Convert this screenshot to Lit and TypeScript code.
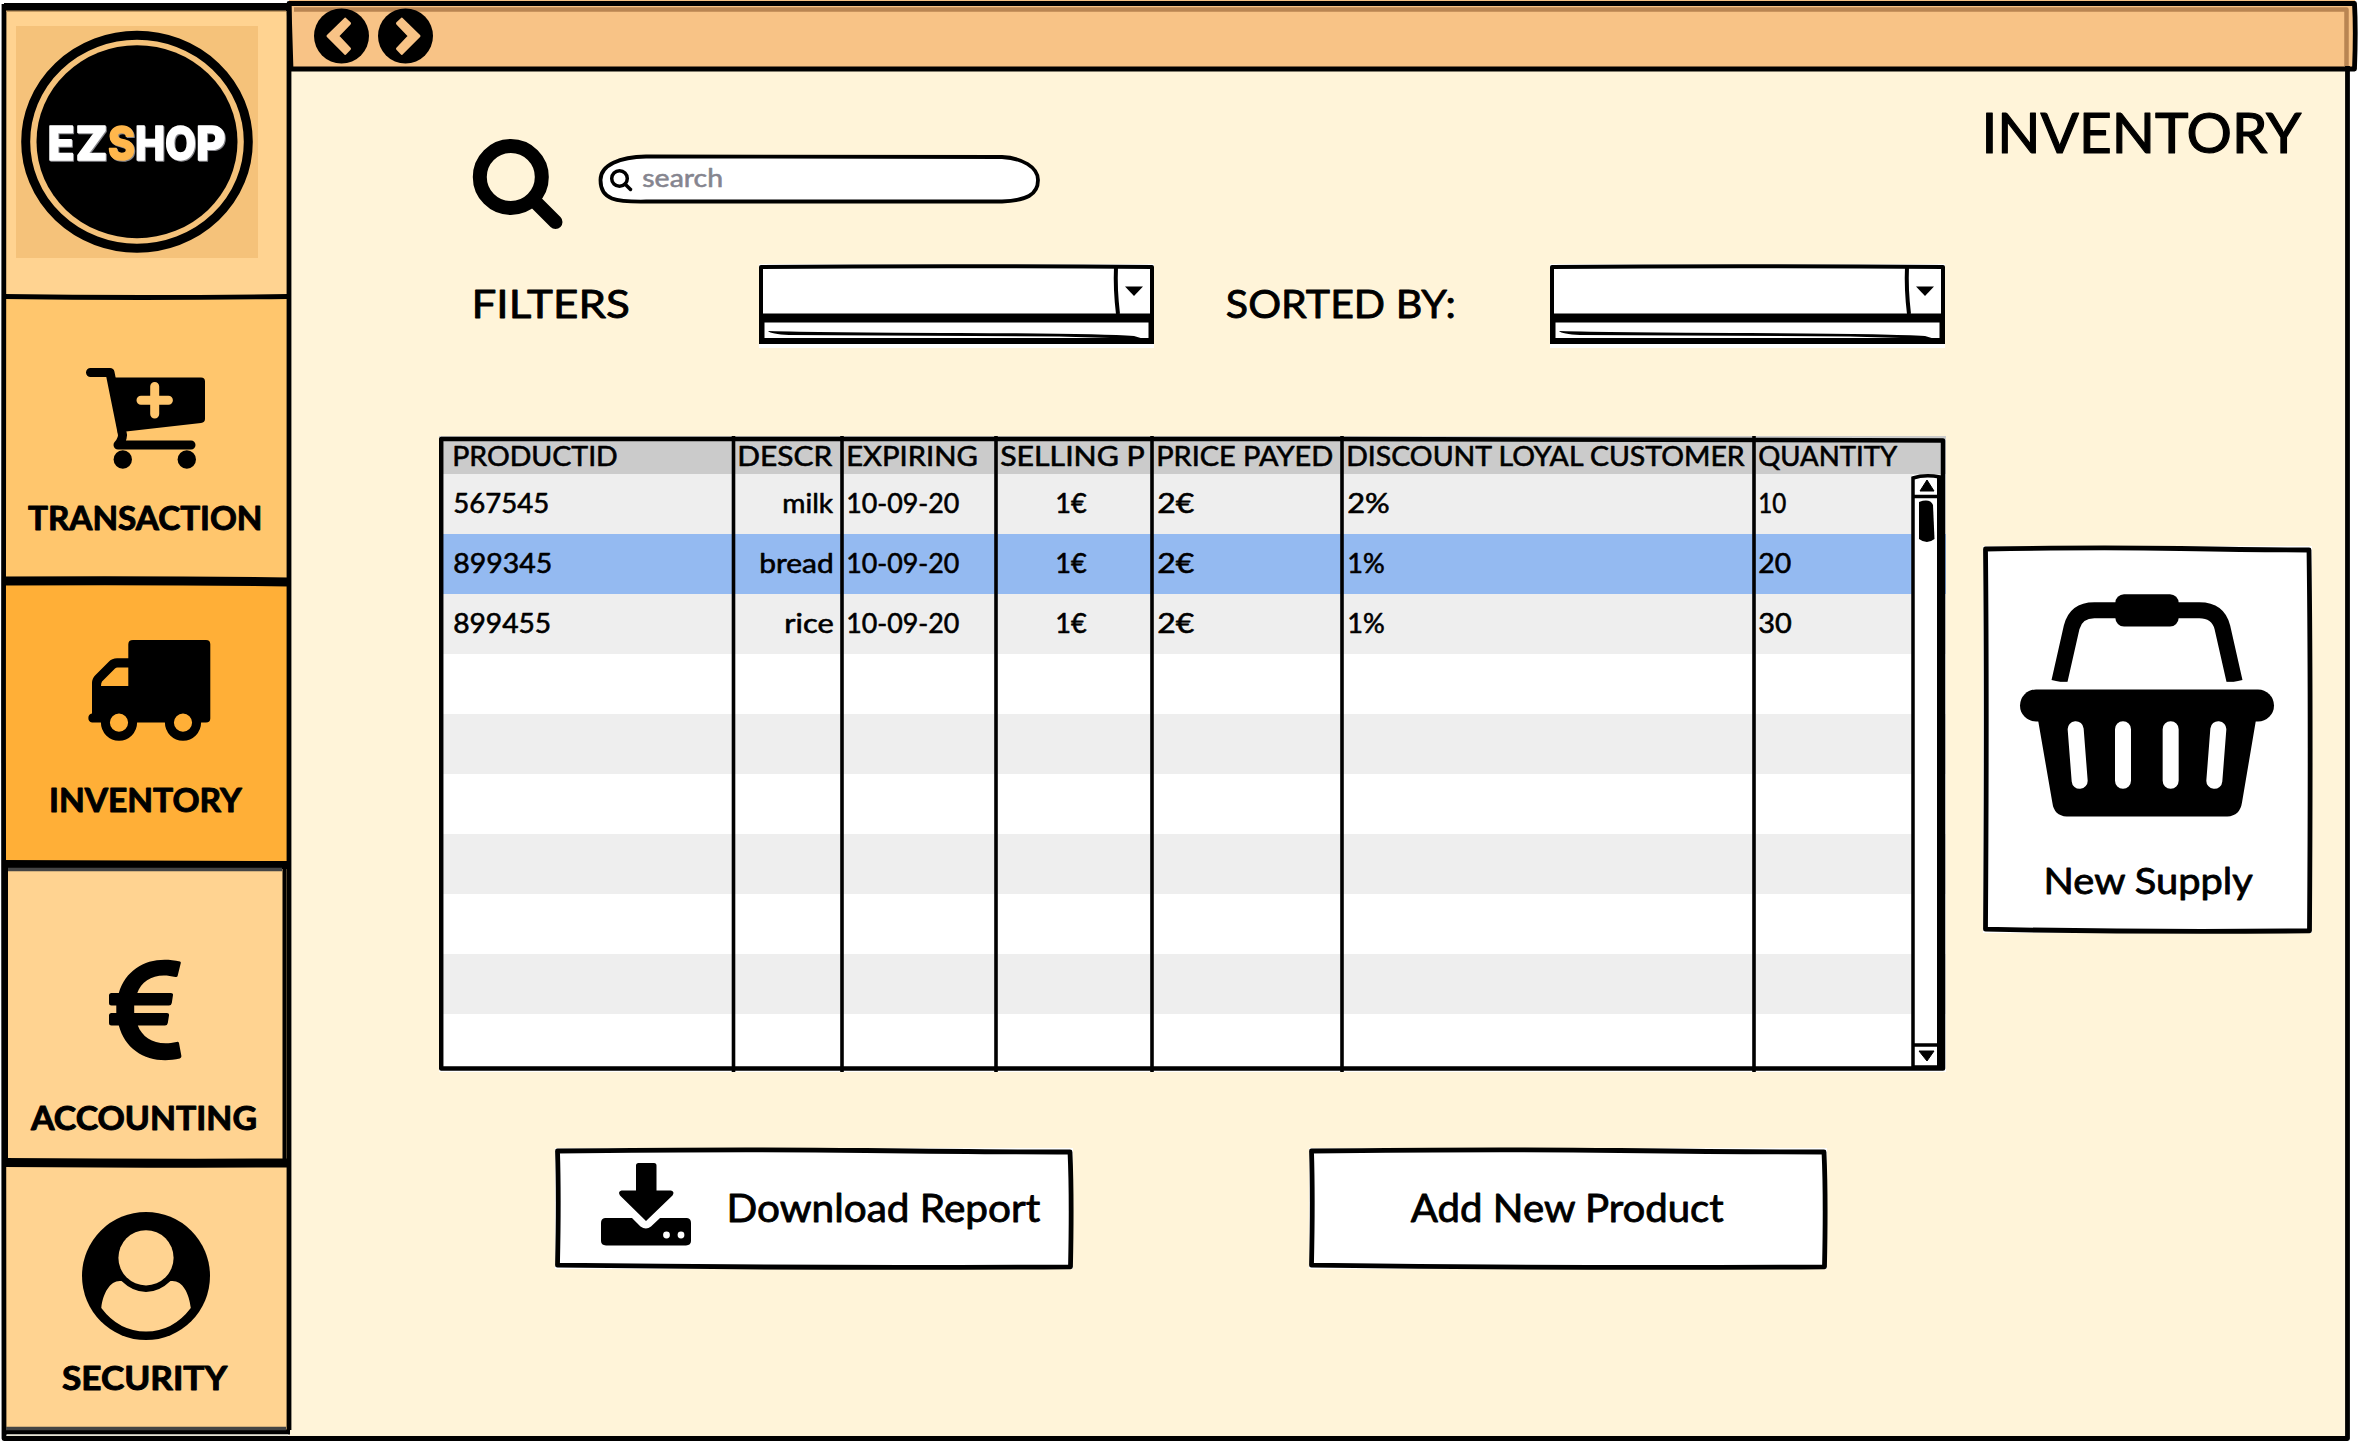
import { LitElement, html, css, svg } from "lit";
import { customElement, property } from "lit/decorators.js";

/* One line of lettering; the host box spans the ink: width x cap height. */
@customElement("pen-text")
class PenText extends LitElement {
  @property() text = "";
  @property({ type: Number }) w = 100;
  @property({ type: Number }) cap = 20;
  @property({ type: Number }) bold = 0;
  static styles = css`
    :host { display: block; flex: none; }
    svg { display: block; overflow: visible; }
    text {
      font-family: Lato, "Liberation Sans", sans-serif;
      fill: currentColor;
      stroke: currentColor;
      stroke-linejoin: round;
      white-space: pre;
    }
  `;
  render() {
    const size = this.cap / 0.72;
    const first = this.text[0];
    const bearing = "1AVTYswQOSC2358".includes(first) ? 0.03 : 0.065;
    const last = this.text[this.text.length - 1];
    const end = "YRrtwykVT:".includes(last) ? 0.005 : 0.045;
    return html`<svg width=${this.w} height=${this.cap}>
      <text x=${-bearing * size} y=${this.cap + 0.5} font-size=${size}
        font-weight=${this.bold ? 700 : 400}
        stroke-width=${this.bold ? size * 0.03 : size * 0.022}
        textLength=${this.w + (bearing + end) * size}
        lengthAdjust="spacingAndGlyphs">${this.text}</text>
    </svg>`;
  }
}

const t = (text: string, w: number, cap: number, bold = 0) =>
  html`<pen-text .text=${text} .w=${w} .cap=${cap} .bold=${bold}></pen-text>`;

/* Slightly uneven rectangle outline filling its positioned parent. */
const frame = (w: number, h: number) => html`<svg class="frame" width=${w} height=${h}>
  <path d="M2.5 3 Q${w * 0.35} 1 ${w * 0.6} 2.5 T${w - 3} 4 Q${w - 1} ${h * 0.4} ${w - 2.5} ${h - 2.2} Q${w * 0.5} ${h - 0.6} 2.5 ${h - 3.8} Q4 ${h * 0.4} 2.5 3Z"
    fill="none" stroke="#000" stroke-width="4.8" stroke-linejoin="round"/></svg>`;

const cart = svg`<path d="M4.5 4.5 H24 L36 64 Q38 70 32 77 H105" fill="none" stroke="#000" stroke-width="9" stroke-linecap="round" stroke-linejoin="round"/>
  <path d="M24 9.5 H115 Q119 9.5 119 13.5 V51 Q119 54.5 115 55 L40 63.5 L32 66Z"/>
  <circle cx="36.8" cy="91.5" r="9.2"/><circle cx="100.8" cy="91.5" r="9.2"/>
  <path d="M68.7 18.5 V46 M55 32.2 H82.4" stroke="#ffc66d" stroke-width="9" stroke-linecap="round"/>`;

const truck = svg`<path fill-rule="evenodd" d="M46 0 H119 Q123.300 0 123.300 4.300 V78.500 Q123.300 82.500 119 82.500 H5 A4.600 4.600 0 0 1 5 73.500 V43 Q5 38.500 8.500 35 L21.500 22 Q25 18.300 30 18.300 H41.300 V4.300 Q41.300 0 46 0Z M41.300 27.500 H30.500 Q29 27.500 28 28.500 L15 41.500 Q14 43 14 46 H41.300Z"/>
  <circle cx="32" cy="82.600" r="13.600" fill="#ffaf37" stroke="#000" stroke-width="9"/>
  <circle cx="96" cy="82.600" r="13.600" fill="#ffaf37" stroke="#000" stroke-width="9"/>`;

const euro = svg`<path d="M71 2.500 Q72 2.800 71.800 4 L68.600 17 Q68.200 18.300 66.500 18 C48 13 33 20 28.300 34 H62 Q64.300 34 64 36 L62.800 44 Q62.300 46.500 60 46.500 H25.200 V54 H58 Q60.500 54 60 56.500 L58.800 64 Q58.300 66.500 56 66.500 H28.800 C34 80 48 87.500 67.500 83 Q69.500 82.300 70 84 L72.400 97 Q72.600 98.800 70.800 99.500 C43 106 17 94 9.800 66.500 H2.500 Q0 66.500 0 64 V56.500 Q0 54 2.500 54 H7.300 V46.500 H2.500 Q0 46.500 0 44 V36.500 Q0 34 2.500 34 H9.800 C18 7 43 -4 71 2.500Z"/>`;

const person = svg`<circle cx="64" cy="64" r="64"/>
  <circle cx="64" cy="45.800" r="27.600" fill="#ffd391"/>
  <path d="M39.500 69 Q51 80 64 80 T88.500 69 C100 67.500 107 80 108.800 96 Q91 119.500 64 119.500 T19.300 96 C21 80 29 67.500 39.500 69Z" fill="#ffd391"/>`;

const logoLetters: [string, number, number][] = [
  ["E", 31.5, 27], ["Z", 59.5, 32], ["S", 92, 27], ["H", 119, 30], ["O", 149, 31], ["P", 180, 29.5],
];

const headers: [string, number][] = [
  ["PRODUCTID", 162.5], ["DESCR", 93], ["EXPIRING", 128.5], ["SELLING P", 142.5],
  ["PRICE PAYED", 174], ["DISCOUNT LOYAL CUSTOMER", 396.5], ["QUANTITY", 138],
];
const rows: [string, number][][] = [
  [["567545", 94], ["milk", 49], ["10-09-20", 111], ["1€", 29.5], ["2€", 35], ["2%", 40.5], ["10", 26]],
  [["899345", 97], ["bread", 71.5], ["10-09-20", 111], ["1€", 29.5], ["2€", 35], ["1%", 35.5], ["20", 31]],
  [["899455", 96], ["rice", 46.5], ["10-09-20", 111], ["1€", 29.5], ["2€", 35], ["1%", 35.5], ["30", 31.5]],
  [], [], [], [], [], [], [],
];

const chevron = "345.2,19.2 349.5,23.4 337.5,36 349.5,48.700 345.2,53.300 328,36";

@customElement("app-root")
class AppRoot extends LitElement {
  static styles = css`
    :host { display: block; width: 2358px; height: 1442px; background: #fff; overflow: hidden; }
    * { box-sizing: border-box; }
    svg { display: block; flex: none; overflow: visible; }
    .window { position: relative; display: grid; grid-template-columns: 289px 1fr; height: 1442px; }
    .lines { position: absolute; left: 0; top: 0; pointer-events: none; }
    .frame { position: absolute; left: 0; top: 0; }
    .side { display: flex; flex-direction: column; padding: 4px 0 0 3px; height: 1438px; }
    .cell { display: flex; flex-direction: column; flex: none; }
    .logo { height: 293px; background: #ffd391; padding: 22px 0 0 13px; }
    .wordmark { font-family: Inter, sans-serif; font-weight: 800; font-size: 46px; fill: #fff; stroke: #fff; stroke-width: 1.5px; stroke-linejoin: round; filter: drop-shadow(1.5px 1.5px 0 #85858a); }
    .wordmark .accent { fill: #ffb74c; stroke: #ffb74c; }
    .transaction { height: 284px; background: #ffc66d; padding: 71px 0 0 83px; }
    .transaction pen-text { margin: 36.5px 0 0 -57.500px; }
    .inventory { height: 284px; background: #ffaf37; padding: 59px 0 0 84px; }
    .inventory pen-text { margin: 46.500px 0 0 -36px; }
    .accounting { height: 298px; background: #ffd391; padding: 94px 0 0 106px; }
    .accounting pen-text { margin: 45.500px 0 0 -77px; }
    .security { height: 270px; background: #ffd391; padding: 49px 0 0 79px; }
    .security pen-text { margin: 25.500px 0 0 -19px; }
    .main { display: flex; flex-direction: column; }
    .bar { height: 68px; background: #f8c386; margin-right: 3px; }
    .body { display: flex; height: 1371px; width: 2059px; background: #fff4d9; padding-left: 150px; }
    .work { width: 1506px; display: flex; flex-direction: column; }
    .search { display: flex; align-items: flex-start; gap: 35px; padding: 71px 0 0 34px; height: 161px; }
    .field { width: 442px; height: 50px; margin-top: 15px; position: relative; display: flex; align-items: flex-start; }
    .field svg.pill { position: absolute; left: 0; top: 0; }
    .field .glass { margin: 15px 0 0 12px; position: relative; }
    .field pen-text { color: #85858f; position: relative; margin: 14px 0 0 10.500px; }
    .filters { display: flex; align-items: flex-start; margin-top: 35px; padding-left: 34.500px; height: 84px; }
    .filters pen-text { margin-top: 25px; }
    .filters .combo1 { margin-left: 131.500px; }
    .filters .sorted { margin-left: 73px; }
    .filters .combo2 { margin-left: 94.500px; }
    .table { margin-top: 88px; width: 1507px; height: 636px; position: relative; background: #fff; display: flex; flex-direction: column; padding: 0; overflow: hidden; }
    .row { display: grid; grid-template-columns: 295px 108px 154px 156px 190px 412px 192px; height: 60px; flex: none; padding-top: 18.500px; }
    .row.head { height: 38px; background: #cbcbcb; padding-top: 9px; }
    .row.odd { background: #eee; }
    .row.picked { background: #94baf1; }
    .c { display: flex; padding-left: 5px; }
    .c0 { padding-left: 14.500px; }
    .c2, .c4, .c5 { padding-left: 6px; }
    .row:not(.head) .c1 { justify-content: flex-end; padding-right: 9.500px; }
    .row:not(.head) .c3 { padding-left: 60px; }
    .row:not(.head) .c2 { padding-left: 5px; }
    .buttons { display: flex; gap: 236px; margin-top: 76px; padding-left: 116px; }
    .button { position: relative; width: 518px; height: 121px; background: #fff; display: flex; align-items: flex-start; }
    .dl { padding: 14.500px 0 0 46px; }
    .dl pen-text { margin: 31px 0 0 38px; }
    .add { padding: 45.500px 0 0 103px; }
    .extra { width: 329px; margin-left: 37.500px; display: flex; flex-direction: column; padding-top: 44px; }
    .extra > pen-text { margin-left: 2px; }
    .supply { position: relative; margin-top: 394px; width: 329px; height: 387px; background: #fff; padding: 48px 0 0 37.500px; }
    .supply pen-text { margin: 49px 0 0 26px; }
  `;

  combo() {
    return html`<svg width="395" height="84">
      <rect width="395" height="84" fill="#fff"/>
      <path d="M2 3 Q180 1.500 393 3 V52 H2Z" fill="none" stroke="#000" stroke-width="4" stroke-linejoin="round"/>
      <path d="M357 3 Q356 25 359 50" fill="none" stroke="#000" stroke-width="4"/>
      <path d="M366 22.500 H384 L375 32Z"/>
      <path d="M0 49.500 H395 V80 H0Z M5.500 58.500 V74 H389.500 V58.500Z" fill-rule="evenodd"/>
      <path d="M9 67 Q60 68.500 200 69 T375 72 L385 75 L300 72.500 L30 71 Q12 70 9 67Z"/>
    </svg>`;
  }

  render() {
    return html`<div class="window">
      <nav class="side">
        <div class="cell logo">
          <svg width="242" height="232">
            <rect width="242" height="232" fill="#f5c27a"/>
            <ellipse cx="121" cy="115.700" rx="111.300" ry="106.500" fill="none" stroke="#000" stroke-width="9"/>
            <ellipse cx="121" cy="115.700" rx="100.500" ry="96.500"/>
            <g class="wordmark">
              ${logoLetters.map(([ch, x, w]) =>
                svg`<text class=${ch === "S" ? "accent" : ""} x=${x} y="133.700" textLength=${w} lengthAdjust="spacingAndGlyphs">${ch}</text>`)}
            </g>
          </svg>
        </div>
        <div class="cell transaction"><svg width="120" height="101">${cart}</svg>${t("TRANSACTION", 232, 23, 1)}</div>
        <div class="cell inventory"><svg width="124" height="101">${truck}</svg>${t("INVENTORY", 190.5, 23, 1)}</div>
        <div class="cell accounting"><svg width="73" height="101">${euro}</svg>${t("ACCOUNTING", 223.5, 23, 1)}</div>
        <div class="cell security"><svg width="128" height="128">${person}</svg>${t("SECURITY", 164, 23, 1)}</div>
      </nav>
      <main class="main">
        <div class="bar"></div>
        <div class="body">
          <section class="work">
            <div class="search">
              <svg width="90" height="90">
                <circle cx="37.800" cy="38" r="31" fill="none" stroke="#000" stroke-width="14"/>
                <path d="M60 60.500 L82.500 83" stroke="#000" stroke-width="14" stroke-linecap="round"/>
              </svg>
              <div class="field">
                <svg class="pill" width="442" height="50">
                  <path d="M48 2.500 Q220 2 404 3 C424 4 440 13 440 26 C440 41 428 46.500 404 47.500 L48 47.500 C18 48 2.500 46 2.500 26 C2.500 11 22 3 48 2.500Z" fill="#fff" stroke="#000" stroke-width="3.800"/>
                </svg>
                <svg class="glass" width="22" height="22">
                  <circle cx="9.500" cy="9.500" r="7.800" fill="none" stroke="#000" stroke-width="3.500"/>
                  <path d="M15 15 L20.500 20.500" stroke="#000" stroke-width="3.500" stroke-linecap="round"/>
                </svg>
                ${t("search", 79, 18)}
              </div>
            </div>
            <div class="filters">
              ${t("FILTERS", 154, 28)}
              <div class="combo1">${this.combo()}</div>
              <div class="sorted">${t("SORTED BY:", 228.5, 28)}</div>
              <div class="combo2">${this.combo()}</div>
            </div>
            <div class="table">
              <div class="row head">${headers.map(([s, w], i) => html`<div class="c c${i}">${t(s, w, 20)}</div>`)}</div>
              ${rows.map((r, n) => html`<div class="row ${n === 1 ? "picked" : n % 2 ? "" : "odd"}">
                ${r.map(([s, w], i) => html`<div class="c c${i}">${t(s, w, 19)}</div>`)}</div>`)}
              <svg class="frame" width="1507" height="636">
                <rect x="1473" y="39" width="30" height="593" fill="#fff"/>
                <path d="M2.200 3 H900 L1504 4.500 V632.500 H2.200 Q3.500 300 2.200 3Z" fill="none" stroke="#000" stroke-width="4.500" stroke-linejoin="round"/>
                ${[294.5, 403, 557, 713, 903, 1315].map((x) => svg`<path d=${`M${x} 0 V636`} stroke="#000" stroke-width="3.600"/>`)}
                <path d="M1474 42 Q1486 38 1501 41 V631 H1474Z" fill="none" stroke="#000" stroke-width="3.500"/>
                <path d="M1501 40 V632" stroke="#000" stroke-width="6"/>
                <path d="M1474 60.500 H1502 M1474 609 H1502" stroke="#000" stroke-width="3.500"/>
                <path d="M1481 55 L1488 44 L1495 55Z M1480 615 H1495 L1488 625Z" stroke="#000" stroke-width="1"/>
                <path d="M1480 66 Q1491 62 1494 69 L1495.500 103 Q1488 109 1480 103Z"/>
              </svg>
            </div>
            <div class="buttons">
              <div class="button dl">${frame(518, 121)}
                <svg width="90" height="83">
                  <path d="M35 2.500 Q35 0 37.500 0 H53 Q55.500 0 55.500 2.500 V27.500 H70 Q74 28.500 71.500 32.500 L45 58 L19 32.500 Q16.500 28.500 20.500 27.500 H35Z"/>
                  <path d="M4 55 H31 L39.500 63.500 Q45 67.500 50 63.500 L59 55 H86 Q90 55.500 90 60 V78 Q90 82 85 82.500 H5 Q0 82 0 78 V60 Q0 55.500 4 55Z"/>
                  <circle cx="65.500" cy="72" r="3.400" fill="#fff"/><circle cx="80" cy="72" r="3.400" fill="#fff"/>
                </svg>
                ${t("Download Report", 311, 27.5)}
              </div>
              <div class="button add">${frame(518, 121)}${t("Add New Product", 311.5, 27.5)}</div>
            </div>
          </section>
          <aside class="extra">
            ${t("INVENTORY", 316, 40)}
            <div class="supply">${frame(329, 387)}
              <svg width="254" height="223" viewBox="240 193 762 668">
                <path d="M358 456 L395 292 Q408 241 463 241 H778 Q834 241 847 292 L884 456" fill="none" stroke="#000" stroke-width="48"/>
                <rect x="300" y="456" width="640" height="23" fill="#fff"/>
                <rect x="526" y="193" width="190" height="97" rx="26"/>
                <rect x="240" y="479" width="762" height="96" rx="48"/>
                <path d="M294 570 H948 L906 818 Q900 858 862 860 H380 Q342 858 337 818Z"/>
                <path d="M407 598 L419 753 M549 598 V753 M692 598 V753 M835 598 L823 753" stroke="#fff" stroke-width="48" stroke-linecap="round"/>
              </svg>
              ${t("New Supply", 206.5, 27)}
            </div>
          </aside>
        </div>
      </main>
      <svg class="lines" width="2358" height="1442">
        <g fill="none" stroke="#000" stroke-width="4.800" stroke-linejoin="round">
          <path d="M4 4 Q2.500 300 3.500 700 T4 1438.500 H2347.500 V66" />
          <path d="M4 7 H288" stroke-width="8"/>
          <path d="M289 3.500 H2354.500 Q2356 30 2354.500 69 H291 Z"/>
          <path d="M289 4 V1430"/>
          <path d="M4 296.500 Q140 298.500 288 296.500"/>
          <path d="M4 581 Q160 580 288 582" stroke-width="9"/>
          <path d="M4 864 Q150 865 288 865" stroke-width="8"/>
          <path d="M4 1162.500 Q150 1163.500 288 1163" stroke-width="9"/>
          <path d="M4 1432 H290" />
          <path d="M6 868 V1160" stroke-width="4"/>
          <path d="M284.500 868 V1160" stroke-width="4"/>
        </g>
        <path d="M8 869.500 H282 M6 1428.500 H286" stroke="#444" stroke-width="3.500"/>
        <path d="M7 1435.300 H288" stroke="#e8e6d4" stroke-width="1.500"/>
        <path d="M6 11.300 H286" stroke="#c39a63" stroke-width="1.500"/>
        <path d="M294 9.500 H2346.500 V66" fill="none" stroke="#b98552" stroke-width="4.500" stroke-linejoin="round"/>
        <circle cx="341.500" cy="36" r="27.500"/><circle cx="405.500" cy="36" r="27.500"/>
        <g fill="#f8c386" stroke="#f8c386" stroke-width="3" stroke-linejoin="round">
          <polygon points=${chevron}/><polygon points=${chevron} transform="translate(747 0) scale(-1 1)"/>
        </g>
      </svg>
    </div>`;
  }
}
